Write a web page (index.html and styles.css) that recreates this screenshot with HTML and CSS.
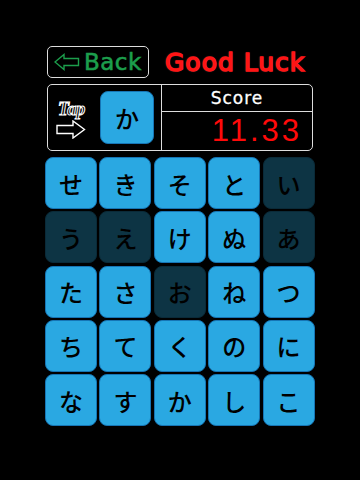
FILE: index.html
```html
<!DOCTYPE html>
<html>
<head>
    <link rel="stylesheet" href="styles.css">
</head>
<body>
    <div class="page">
        <div class="header">
            <div class="back-btn">
                <svg class="back-arrow" width="26" height="18" viewBox="0 0 26 18">
                    <path d="M1 9 L10 1.5 L10 5.5 L24.5 5.5 L24.5 12.5 L10 12.5 L10 16.5 Z" fill="none" stroke="#1c9e4c" stroke-width="1.4" stroke-linejoin="miter"/>
                </svg>
                <span class="back-text">Back</span>
            </div>
            <div class="good-luck">Good Luck</div>
        </div>

        <div class="panel">
            <div class="target">
                <div class="tap-hint">
                    <svg class="tap-label" width="40" height="18" viewBox="0 0 40 18">
                        <text class="tap-text" x="2" y="14">Tap</text>
                    </svg>
                    <svg width="30" height="19" viewBox="0 0 30 19">
                        <path d="M1 5.5 L17 5.5 L17 1 L28.5 9.5 L17 18 L17 13.5 L1 13.5 Z" fill="#000" stroke="#fff" stroke-width="1.4"/>
                    </svg>
                </div>
                <div class="key-tile">か</div>
            </div>
            <div class="score-box">
                <div class="score-label">Score</div>
                <div class="score-value">11.33</div>
            </div>
        </div>

        <div class="board" id="board"></div>
    </div>

    <script>
        // true = already tapped (dark tile)
        const tiles = [
            ['せ', false], ['き', false], ['そ', false], ['と', false], ['い', true],
            ['う', true], ['え', true], ['け', false], ['ぬ', false], ['あ', true],
            ['た', false], ['さ', false], ['お', true], ['ね', false], ['つ', false],
            ['ち', false], ['て', false], ['く', false], ['の', false], ['に', false],
            ['な', false], ['す', false], ['か', false], ['し', false], ['こ', false]
        ];

        const board = document.getElementById('board');
        tiles.forEach(([kana, done]) => {
            const tile = document.createElement('div');
            tile.className = done ? 'tile done' : 'tile';
            tile.textContent = kana;
            board.appendChild(tile);
        });
    </script>
</body>
</html>
```

FILE: styles.css
```css
body {
    margin: 0;
    padding: 0;
    background: #000;
    font-family: "DejaVu Sans", sans-serif;
}

.page {
    width: 360px;
    height: 480px;
    padding-top: 46px;
    box-sizing: border-box;
}

.header {
    display: flex;
    align-items: center;
    margin-left: 47px;
    width: 266px;
    height: 32px;
}

.back-btn {
    width: 102px;
    height: 32px;
    box-sizing: border-box;
    border: 1.5px solid #ddd;
    border-radius: 5px;
    display: flex;
    align-items: center;
    padding-left: 6px;
    gap: 4px;
}

.back-text {
    color: #1c9e4c;
    font-size: 23px;
    line-height: 1;
    letter-spacing: 0.5px;
    -webkit-text-stroke: 0.6px #1c9e4c;
}

.good-luck {
    margin-left: 16px;
    color: #ff1414;
    font-size: 25px;
    line-height: 1;
    -webkit-text-stroke: 1.4px #ff1414;
    text-shadow: 0 0 1.2px #ffc8c8;
    letter-spacing: 1px;
}

.panel {
    display: flex;
    margin-left: 47px;
    margin-top: 6px;
    width: 266px;
    height: 67px;
    box-sizing: border-box;
    border: 1.5px solid #ddd;
    border-radius: 5px;
}

.target {
    width: 114px;
    box-sizing: border-box;
    border-right: 1.5px solid #ddd;
    display: flex;
    align-items: center;
    padding-left: 8px;
}

.tap-hint {
    display: flex;
    flex-direction: column;
    align-items: flex-start;
    width: 44px;
    margin-top: 4px;
    gap: 1px;
}

.tap-label {
    overflow: visible;
}

.tap-text {
    font-family: "Liberation Serif", serif;
    font-style: italic;
    font-weight: bold;
    font-size: 18px;
    fill: #000;
    stroke: #fff;
    stroke-width: 1;
}

.key-tile {
    width: 54px;
    height: 53px;
    box-sizing: border-box;
    background: #2aa8e2;
    border: 1.5px solid #1675b5;
    border-radius: 8px;
    display: flex;
    align-items: center;
    justify-content: center;
    font-family: "Noto Sans CJK JP", sans-serif;
    font-size: 24px;
    font-weight: 500;
    color: #000;
}

.score-box {
    flex: 1;
    display: flex;
    flex-direction: column;
}

.score-label {
    height: 27px;
    box-sizing: border-box;
    border-bottom: 1.5px solid #ddd;
    color: #fff;
    font-size: 17px;
    letter-spacing: 1px;
    text-align: center;
    line-height: 26px;
    -webkit-text-stroke: 0.3px #fff;
}

.score-value {
    flex: 1;
    color: #ff0a0a;
    font-family: "Liberation Sans", sans-serif;
    font-size: 31px;
    letter-spacing: 3px;
    text-align: right;
    padding-right: 10px;
    line-height: 38px;
}

.board {
    display: grid;
    grid-template-columns: repeat(5, 52px);
    grid-auto-rows: 52px;
    gap: 2.3px 2.4px;
    margin-left: 45px;
    margin-top: 6px;
}

.tile {
    box-sizing: border-box;
    background: #2aa8e2;
    border: 1.5px solid #1675b5;
    border-radius: 8px;
    display: flex;
    align-items: center;
    justify-content: center;
    font-family: "Noto Sans CJK JP", sans-serif;
    font-size: 24px;
    font-weight: 500;
    color: #000;
}

.tile.done {
    background: #0d3444;
    border-color: #0a2a38;
}
```
